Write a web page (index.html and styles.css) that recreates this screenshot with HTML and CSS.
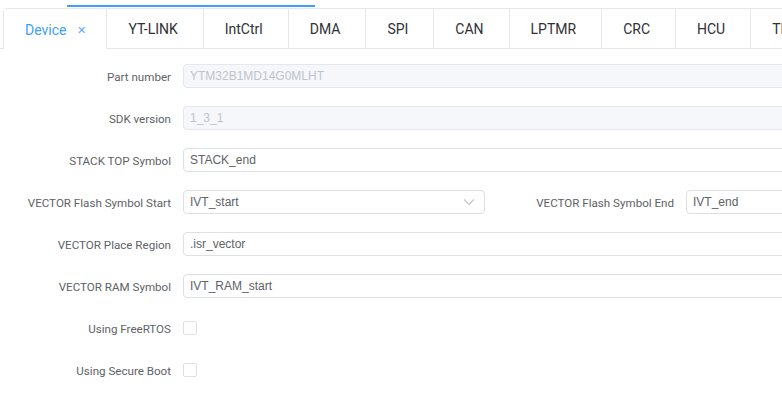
FILE: index.html
```html
<!DOCTYPE html>
<html>
<head>
<meta charset="utf-8">
<link rel="stylesheet" href="styles.css">
</head>
<body>
<div class="page">
  <div class="scroll-track"><div class="scroll-thumb"></div></div>
  <div class="tabs-header">
    <div class="tabs-nav">
      <div class="tab active">Device<span class="close">&#x2715;</span></div>
      <div class="tab">YT-LINK</div>
      <div class="tab">IntCtrl</div>
      <div class="tab">DMA</div>
      <div class="tab">SPI</div>
      <div class="tab">CAN</div>
      <div class="tab">LPTMR</div>
      <div class="tab">CRC</div>
      <div class="tab">HCU</div>
      <div class="tab">TRNG</div>
      <div class="tab">WDG</div>
    </div>
  </div>
  <div class="form">
    <div class="row">
      <label class="label">Part number</label>
      <div class="input disabled wide">YTM32B1MD14G0MLHT</div>
    </div>
    <div class="row">
      <label class="label">SDK version</label>
      <div class="input disabled wide">1_3_1</div>
    </div>
    <div class="row">
      <label class="label">STACK TOP Symbol</label>
      <div class="input wide">STACK_end</div>
    </div>
    <div class="row two">
      <div class="cell">
        <label class="label">VECTOR Flash Symbol Start</label>
        <div class="input select">IVT_start
          <svg class="chev" width="12" height="8" viewBox="0 0 12 8"><path d="M1 1.5 L6 6.5 L11 1.5" fill="none" stroke="#c0c4cc" stroke-width="1.1"/></svg>
        </div>
      </div>
      <div class="cell">
        <label class="label">VECTOR Flash Symbol End</label>
        <div class="input half">IVT_end</div>
      </div>
    </div>
    <div class="row">
      <label class="label">VECTOR Place Region</label>
      <div class="input wide">.isr_vector</div>
    </div>
    <div class="row">
      <label class="label">VECTOR RAM Symbol</label>
      <div class="input wide">IVT_RAM_start</div>
    </div>
    <div class="row">
      <label class="label">Using FreeRTOS</label>
      <span class="checkbox"></span>
    </div>
    <div class="row">
      <label class="label">Using Secure Boot</label>
      <span class="checkbox"></span>
    </div>
  </div>
</div>
</body>
</html>
```
FILE: styles.css
```css
html, body {
  margin: 0;
  padding: 0;
  background: #fff;
  overflow: hidden;
}
.page {
  width: 1100px;
  font-family: "Roboto", "Open Sans", sans-serif;
}
.scroll-track {
  height: 8px;
  padding-left: 67px;
  display: flex;
  align-items: flex-end;
  box-sizing: border-box;
}
.scroll-thumb {
  width: 248px;
  height: 2px;
  background: #409eff;
  margin-bottom: 1px;
}
.tabs-header {
  border-bottom: 1px solid #e4e7ed;
  padding-left: 3px;
  height: 40px;
  box-sizing: content-box;
}
.tabs-nav {
  display: flex;
  border: 1px solid #e4e7ed;
  border-bottom: none;
  border-radius: 4px 4px 0 0;
  height: 40px;
  box-sizing: border-box;
  width: max-content;
}
.tab {
  height: 39px;
  line-height: 37px;
  padding: 2px 25px 0 21px;
  font-family: "Roboto", "Open Sans", sans-serif;
  font-size: 14px;
  color: #303133;
  border-left: 1px solid #e4e7ed;
  box-sizing: border-box;
  display: flex;
  align-items: center;
  background: #fff;
}
.tab:first-child { border-left: none; }
.tab.active {
  color: #409eff;
  height: 40px;
  margin-bottom: -1px;
  padding-left: 21px;
  padding-right: 20px;
}
.close {
  display: inline-block;
  width: 9px;
  text-align: center;
  font-size: 11px;
  margin-left: 11px;
  color: #5aa9ff;
}
.form {
  padding-top: 15px;
}
.row {
  display: flex;
  align-items: center;
  height: 24px;
  margin-bottom: 18px;
}
.cell {
  display: flex;
  align-items: center;
  margin-right: 18px;
}
.label {
  width: 171px;
  padding-right: 12px;
  padding-top: 2px;
  text-align: right;
  font-family: "Roboto", "Open Sans", sans-serif;
  font-size: 11.6px;
  color: #606266;
  flex: none;
  white-space: nowrap;
}
.input {
  height: 24px;
  box-sizing: border-box;
  border: 1px solid #dcdfe6;
  border-radius: 4px;
  padding: 0 6px;
  font-family: "Liberation Sans", Arial, sans-serif;
  font-size: 12px;
  line-height: 22px;
  color: #606266;
  background: #fff;
  display: flex;
  align-items: center;
  white-space: nowrap;
}
.input.wide { width: 800px; }
.input.half { width: 302px; }
.input.disabled {
  background: #f5f7fa;
  border-color: #e4e7ed;
  color: #c0c4cc;
}
.input.select {
  width: 302px;
  justify-content: space-between;
  padding-right: 9px;
}
.chev { display: block; }
.checkbox {
  width: 12px;
  height: 12px;
  border: 1px solid #dcdfe6;
  border-radius: 2px;
  background: #fff;
  box-sizing: content-box;
}
```
